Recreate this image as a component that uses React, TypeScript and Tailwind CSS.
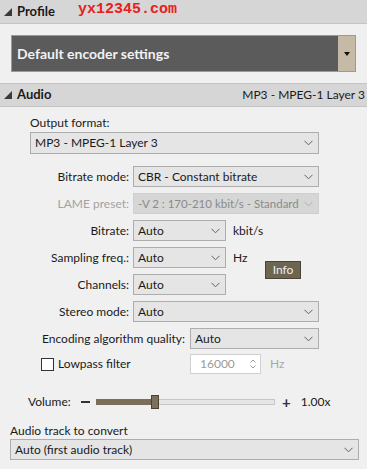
import React from "react";

const Chevron = ({ color = "#555" }: { color?: string }) => (
  <svg width="9" height="6" viewBox="0 0 9 6" className="shrink-0">
    <path d="M0.5 0.8 L4.5 4.8 L8.5 0.8" fill="none" stroke={color} strokeWidth="1" />
  </svg>
);

const Combo = ({
  value,
  className = "",
  disabled = false,
}: {
  value: string;
  className?: string;
  disabled?: boolean;
}) => (
  <div
    className={
      "flex h-[21px] items-center justify-between border pl-[4px] pr-[5px] " +
      (disabled
        ? "border-[#cfcfcf] bg-[#d6d6d6] text-[#8a8a8a] "
        : "border-[#adadad] bg-[#e5e5e5] text-[#1a1a1a] ") +
      className
    }
  >
    <span className={"whitespace-nowrap leading-none " + (disabled ? "text-[11.5px]" : "")}>{value}</span>
    <Chevron color={disabled ? "#b0b0b0" : "#606060"} />
  </div>
);

const Tri = () => (
  <svg width="8" height="8" viewBox="0 0 8 8">
    <path d="M8 0 L8 8 L0 8 Z" fill="#3a3a3a" />
  </svg>
);

export default function App() {
  return (
    <div
      className="flex h-[469px] w-[367px] flex-col overflow-hidden bg-[#f0f0f0] text-[12px] text-[#1a1a1a]"
      style={{ fontFamily: 'Lato, "Noto Sans", sans-serif' }}
    >
      {/* Profile header */}
      <div className="flex h-[24px] shrink-0 items-center border-b border-[#c4c4c4] bg-[#d6d6d6] pl-[4px]">
        <Tri />
        <span className="ml-[5px] text-[13px] font-bold">Profile</span>
        <span
          className="ml-[23px] -mt-[3px] text-[15px] font-bold text-[#e8201c]"
          style={{ fontFamily: '"Liberation Mono", monospace' }}
        >
          yx12345.com
        </span>
      </div>

      {/* Dark profile selector */}
      <div className="mx-[11px] mt-[11px] flex h-[37px] shrink-0 border border-[#9a9a9a] bg-[#5b5b5b]">
        <div className="flex flex-1 items-center pl-[5px] text-[14px] font-bold text-[#f2f2f2]">
          Default encoder settings
        </div>
        <div className="flex w-[17px] items-center justify-center bg-[#c4baa6]">
          <svg width="6" height="4" viewBox="0 0 6 4">
            <path d="M0 0 L6 0 L3 4 Z" fill="#111" />
          </svg>
        </div>
      </div>

      {/* Audio header */}
      <div className="mt-[11px] flex h-[24px] shrink-0 items-center justify-between border-y border-[#c4c4c4] bg-[#d6d6d6] pl-[4px] pr-[2px]">
        <div className="flex items-center">
          <Tri />
          <span className="ml-[5px] text-[13px] font-bold">Audio</span>
        </div>
        <span>MP3 - MPEG-1 Layer 3</span>
      </div>

      {/* Output format */}
      <div className="ml-[30px] mt-[8px] leading-[16px]">Output format:</div>
      <Combo value="MP3 - MPEG-1 Layer 3" className="ml-[30px] mt-[1px] h-[22px] w-[289px]" />

      {/* label rows */}
      <div className="mt-[12px] flex flex-col gap-[6px]">
        <div className="flex items-center">
          <span className="w-[133px] pr-[4px] text-right">Bitrate mode:</span>
          <Combo value="CBR - Constant bitrate" className="w-[186px]" />
        </div>
        <div className="flex items-center">
          <span className="w-[133px] pr-[4px] text-right text-[#a3a3a3]">LAME preset:</span>
          <Combo value="-V 2 : 170-210 kbit/s - Standard" className="w-[186px]" disabled />
        </div>

        <div className="flex items-start">
          <div className="flex w-[265px] flex-col gap-[6px]">
            <div className="flex items-center">
              <span className="w-[133px] pr-[4px] text-right">Bitrate:</span>
              <Combo value="Auto" className="w-[93px]" />
              <span className="ml-[7px]">kbit/s</span>
            </div>
            <div className="flex items-center">
              <span className="w-[133px] pr-[4px] text-right">Sampling freq.:</span>
              <Combo value="Auto" className="w-[93px]" />
              <span className="ml-[7px]">Hz</span>
            </div>
            <div className="flex items-center">
              <span className="w-[133px] pr-[4px] text-right">Channels:</span>
              <Combo value="Auto" className="w-[93px]" />
            </div>
          </div>
          <div className="mt-[41px] flex h-[18px] w-[36px] items-center justify-center border border-[#4a4436] bg-[#6d6552] text-[12px] text-[#eeeeee]">
            Info
          </div>
        </div>

        <div className="flex items-center">
          <span className="w-[133px] pr-[4px] text-right">Stereo mode:</span>
          <Combo value="Auto" className="w-[186px]" />
        </div>
        <div className="flex items-center">
          <span className="ml-[42px] w-[148px] whitespace-nowrap">Encoding algorithm quality:</span>
          <Combo value="Auto" className="w-[129px]" />
        </div>
      </div>

      {/* Lowpass */}
      <div className="mt-[5px] flex items-center">
        <div className="ml-[41px] h-[13px] w-[13px] border border-[#333] bg-white" />
        <span className="ml-[4px] w-[132px]">Lowpass filter</span>
        <div className="flex h-[20px] w-[71px] items-center justify-between border border-[#d0d0d0] bg-white pl-[9px] pr-[4px] text-[#9a9a9a]">
          <span>16000</span>
          <svg width="6" height="10" viewBox="0 0 6 10">
            <path d="M0.5 3.5 L3 1 L5.5 3.5" fill="none" stroke="#9a9a9a" strokeWidth="1" />
            <path d="M0.5 6.5 L3 9 L5.5 6.5" fill="none" stroke="#9a9a9a" strokeWidth="1" />
          </svg>
        </div>
        <span className="ml-[9px] text-[#a8a8a8]">Hz</span>
      </div>

      {/* Volume */}
      <div className="mt-[20px] flex h-[16px] items-center">
        <span className="ml-[28px] w-[53px]">Volume:</span>
        <div className="h-[2px] w-[9px] bg-[#333]" />
        <div className="relative ml-[6px] flex h-[6px] w-[179px] items-stretch">
          <div className="w-[56px] bg-[#7a6e58]" />
          <div className="flex-1 border border-[#c6c6c6] bg-[#e6e6e6]" />
          <div className="absolute left-[55px] top-[-4px] h-[14px] w-[8px] border border-[#4a4334] bg-[#7d715a]" />
        </div>
        <span className="ml-[7px] text-[15px] font-bold leading-none text-[#333]">+</span>
        <span className="ml-[10px]">1.00x</span>
      </div>

      {/* Audio track */}
      <div className="ml-[10px] mt-[13px] leading-[16px]">Audio track to convert</div>
      <Combo value="Auto (first audio track)" className="ml-[10px] mt-[0px] w-[349px]" />
    </div>
  );
}
